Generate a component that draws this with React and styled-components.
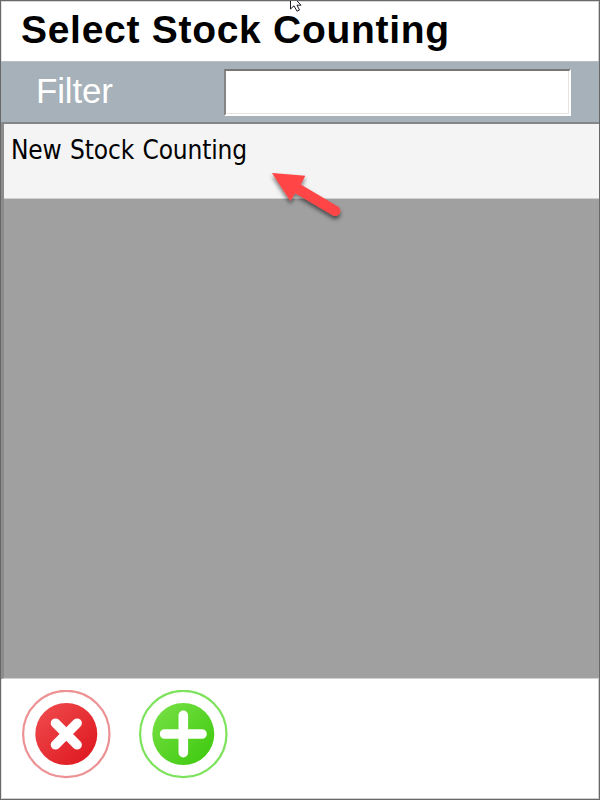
import React from "react";
import styled, { createGlobalStyle } from "styled-components";

const GlobalStyle = createGlobalStyle`
  * { box-sizing: border-box; }
  body { margin: 0; background: #fff; overflow: hidden; }
`;

const Window = styled.div`
  position: relative;
  display: flex;
  flex-direction: column;
  width: 600px;
  height: 800px;
  border: 1px solid #686868;
  background: #fff;
  font-family: "Liberation Sans", Arial, sans-serif;
  overflow: hidden;
`;

const Header = styled.header`
  flex: none;
  height: 60px;
  padding-left: 20px;
  box-shadow: inset 0 1px #d8d8d8, inset 1px 0 #e4e4e4, inset -1px 0 #d0d0d0;
`;

const Title = styled.h1`
  margin: 0;
  font-size: 39px;
  line-height: 58px;
  font-weight: 700;
  letter-spacing: 0.71px;
  white-space: nowrap;
  color: #000;
`;

const FilterBar = styled.div`
  flex: none;
  display: flex;
  height: 61px;
  padding: 7px 28px 0 35px;
  background: #a7b1b9;
  border-top: 1px solid #b5bec5;
`;

const FilterLabel = styled.label`
  width: 188px;
  font-size: 35px;
  line-height: 44px;
  letter-spacing: -0.15px;
  color: #fff;
`;

const FilterInput = styled.input`
  flex: 1;
  min-width: 0;
  height: 47px;
  padding: 0 8px;
  border: 2px solid;
  border-color: #777 #fff #fff #858585;
  box-shadow: inset -1px -1px #e6e6e6;
  border-radius: 0;
  outline: none;
  background: #fff;
  font: 28px "Liberation Sans", Arial, sans-serif;
`;

const List = styled.div`
  flex: none;
  height: 557px;
  border-top: 2px solid #858585;
  border-left: 3px solid #8c8c8c;
  border-bottom: 1px solid #d2d2d2;
  background: #a0a0a0;
`;

const ListItem = styled.div`
  height: 75px;
  padding-left: 7px;
  background: #f4f4f4;
  border-bottom: 1px solid #d0d0d0;
  font-family: "DejaVu Sans Condensed", "DejaVu Sans", sans-serif;
  font-stretch: condensed;
  font-size: 26px;
  line-height: 53px;
  letter-spacing: -0.15px;
  word-spacing: 1.2px;
  white-space: nowrap;
  color: #000;
`;

const Actions = styled.footer`
  flex: 1;
  display: flex;
  gap: 28px;
  padding: 11px 0 0 20px;
  box-shadow: inset 1px 0 #e4e4e4, inset -1px -1px #d0d0d0;
`;

const ActionButton = styled.button`
  width: 89px;
  height: 90px;
  padding: 0;
  border: 0;
  background: none;
  svg { display: block; }
`;

const Pointer = styled.svg`
  position: absolute;
  left: 259px;
  top: 159px;
`;

const Cursor = styled.svg`
  position: absolute;
  left: 288px;
  top: -1px;
`;

function RoundIcon({ id, from, to, ring, children }) {
  return (
    <svg width="90" height="90" viewBox="0 0 90 90">
      <defs>
        <linearGradient id={id} x1="0.1" y1="0.1" x2="0.85" y2="0.9">
          <stop offset="0" stopColor={from} />
          <stop offset="1" stopColor={to} />
        </linearGradient>
      </defs>
      <circle cx="45.3" cy="44" r="43.2" fill="none" stroke={ring} strokeWidth="2.2" />
      <circle cx="45.3" cy="44" r="31" fill={`url(#${id})`} />
      {children}
    </svg>
  );
}

export default function App() {
  return (
    <>
      <GlobalStyle />
      <Window>
        <Header><Title>Select Stock Counting</Title></Header>
        <FilterBar>
          <FilterLabel htmlFor="filter">Filter</FilterLabel>
          <FilterInput id="filter" />
        </FilterBar>
        <List><ListItem>New Stock Counting</ListItem></List>
        <Actions>
          <ActionButton aria-label="Cancel">
            <RoundIcon id="cancel" from="#ee484b" to="#df1b22" ring="#ed9294">
              <path d="M34.5 33.2 56.1 54.8M56.1 33.2 34.5 54.8" stroke="#fff" strokeWidth="9.6" strokeLinecap="round" />
            </RoundIcon>
          </ActionButton>
          <ActionButton aria-label="Add">
            <RoundIcon id="add" from="#74df42" to="#42cb12" ring="#7de35c">
              <path d="M45.3 25.3V62.7M26.6 44H64" stroke="#fff" strokeWidth="9.6" strokeLinecap="round" />
            </RoundIcon>
          </ActionButton>
        </Actions>
        <Pointer width="90" height="70" viewBox="0 0 90 70">
          <defs>
            <filter id="shadow" x="-20%" y="-20%" width="150%" height="150%">
              <feDropShadow dx="0" dy="3" stdDeviation="2.2" floodColor="#000" floodOpacity="0.55" />
            </filter>
          </defs>
          <path filter="url(#shadow)" fill="#ff4444" d="M12 13 45.3 15.7 40.8 24.6 77.5 46.3A5 5 0 0 1 73 55.5L35.2 33.2 30.3 41Z" />
        </Pointer>
        <Cursor width="14" height="13" viewBox="0 0 14 13">
          <path d="M1.5-6V9L5 5.8 8 11.2 10.5 10 8 5.2H12L1.5-6Z" fill="#fff" stroke="#191927" strokeWidth="1" />
        </Cursor>
      </Window>
    </>
  );
}
